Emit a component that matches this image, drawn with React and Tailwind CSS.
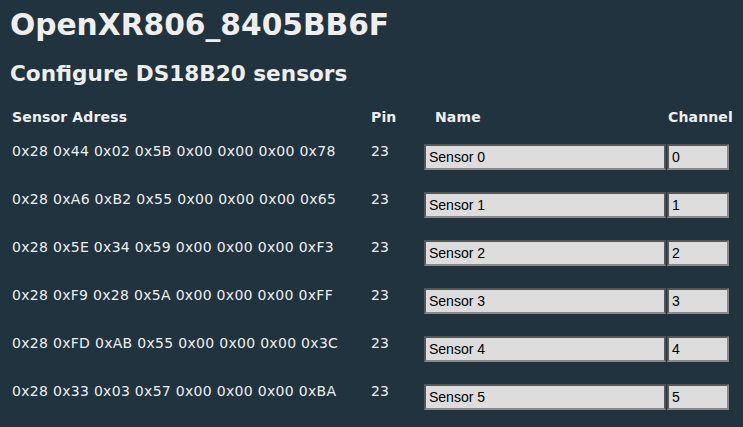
import React from 'react'

const sensors = [
  { addr: '0x28 0x44 0x02 0x5B 0x00 0x00 0x00 0x78', name: 'Sensor 0', ch: '0' },
  { addr: '0x28 0xA6 0xB2 0x55 0x00 0x00 0x00 0x65', name: 'Sensor 1', ch: '1' },
  { addr: '0x28 0x5E 0x34 0x59 0x00 0x00 0x00 0xF3', name: 'Sensor 2', ch: '2' },
  { addr: '0x28 0xF9 0x28 0x5A 0x00 0x00 0x00 0xFF', name: 'Sensor 3', ch: '3' },
  { addr: '0x28 0xFD 0xAB 0x55 0x00 0x00 0x00 0x3C', name: 'Sensor 4', ch: '4' },
  { addr: '0x28 0x33 0x03 0x57 0x00 0x00 0x00 0xBA', name: 'Sensor 5', ch: '5' },
]

export default function App() {
  return (
    <div className="w-[743px] h-[427px] overflow-hidden bg-[#223340] text-[#eeeeee] px-[10px] pt-[6px] font-['DejaVu_Sans',Verdana,sans-serif]">
      <h1 className="text-[29.7px] font-bold leading-[38px]">OpenXR806_8405BB6F</h1>
      <h2 className="mt-[17px] text-[21.6px] font-bold leading-[26px]">Configure DS18B20 sensors</h2>

      <div className="mt-[20px] text-[14px]">
        <div className="flex font-bold h-[30px] items-start tracking-[0.15px]">
          <div className="w-[359px] pl-[2px]">Sensor Adress</div>
          <div className="w-[55px] pl-[2px]">Pin</div>
          <div className="w-[243px] pl-[11px]">Name</div>
          <div className="pl-[1px]">Channel</div>
        </div>
        {sensors.map((s) => (
          <div key={s.ch} className="flex h-[48px] items-start">
            <div className="w-[359px] pl-[2px] pt-[4px] tracking-[0.3px]">{s.addr}</div>
            <div className="w-[55px] pl-[2px] pt-[4px]">23</div>
            <div className="flex pt-[7px] font-['Liberation_Sans',Arial,sans-serif] text-black">
              <input
                readOnly
                value={s.name}
                className="w-[242px] h-[26px] bg-[#dddddd] border-2 border-t-[#555] border-l-[#555] border-r-[#555] border-b-[#888] px-[3px] text-[14px] outline-none"
              />
              <input
                readOnly
                value={s.ch}
                className="ml-[1px] w-[62px] h-[26px] bg-[#dddddd] border-2 border-t-[#555] border-l-[#555] border-r-[#888] border-b-[#888] px-[3px] text-[14px] outline-none"
              />
            </div>
          </div>
        ))}
      </div>
    </div>
  )
}
